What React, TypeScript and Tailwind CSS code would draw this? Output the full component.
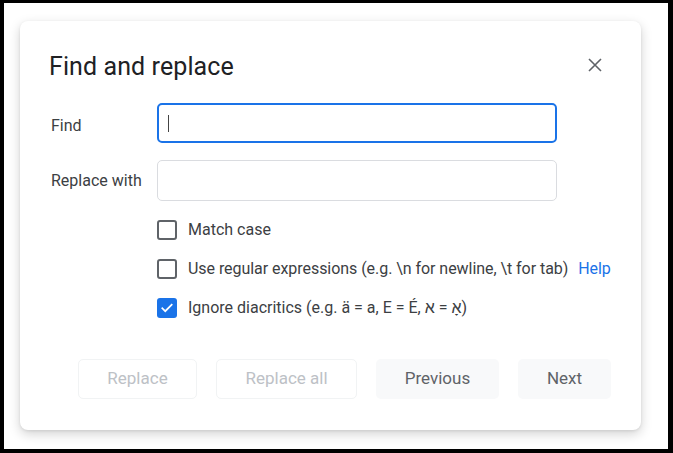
import React from "react";

function Checkbox({ checked }: { checked?: boolean }) {
  if (checked) {
    return (
      <div className="w-[20px] h-[20px] rounded-[3px] bg-[#1a73e8] flex items-center justify-center shrink-0">
        <svg width="14" height="14" viewBox="0 0 24 24">
          <path d="M4 12.5l5 5L20 6.5" fill="none" stroke="white" strokeWidth="3" strokeLinecap="square" />
        </svg>
      </div>
    );
  }
  return <div className="w-[20px] h-[20px] rounded-[3px] border-2 border-[#5f6368] shrink-0" />;
}

export default function App() {
  return (
    <div
      className="w-[673px] h-[453px] bg-black pl-[4px] pt-[3px] pr-[5px] pb-[4px]"
      style={{ fontFamily: "Roboto, 'Noto Sans', sans-serif" }}
    >
      <div className="w-full h-full bg-white pl-[16px] pt-[18px]">
        <div className="w-[621px] h-[409px] bg-white rounded-[8px] shadow-[0_4px_12px_rgba(0,0,0,0.18),0_1px_3px_rgba(0,0,0,0.08)] pl-[29px] pr-[30px] pt-[28px] flex flex-col">
          <div className="flex items-center justify-between h-[36px]">
            <div className="text-[25px] text-[#202124] leading-[36px] tracking-[0.1px]">Find and replace</div>
            <svg width="14" height="14" viewBox="0 0 14 14" className="mr-[9px] mb-[4px]">
              <path d="M1 1L13 13M13 1L1 13" stroke="#5f6368" strokeWidth="1.6" />
            </svg>
          </div>
          <div className="flex items-center mt-[18px]">
            <div className="w-[108px] pl-[2px] pt-[6px] text-[16px] text-[#3c4043]">Find</div>
            <div className="w-[400px] h-[40px] rounded-[5px] border-2 border-[#1a73e8] flex items-center pl-[9px]">
              <div className="w-[1px] h-[17px] bg-[#444]" />
            </div>
          </div>
          <div className="flex items-center mt-[17px]">
            <div className="w-[108px] pl-[2px] text-[16px] text-[#3c4043]">Replace with</div>
            <div className="w-[400px] h-[41px] rounded-[5px] border border-[#dadce0]" />
          </div>
          <div className="pl-[108px] mt-[19px] flex flex-col gap-[19px] text-[16px] text-[#3c4043]">
            <div className="flex items-center gap-[11px] h-[20px]">
              <Checkbox />
              <span>Match case</span>
            </div>
            <div className="flex items-center gap-[11px] h-[20px]">
              <Checkbox />
              <span className="tracking-[-0.05px]">
                Use regular expressions (e.g. \n for newline, \t for tab){" "}
                <span className="text-[#1a73e8] ml-[6px]">Help</span>
              </span>
            </div>
            <div className="flex items-center gap-[11px] h-[20px]">
              <Checkbox checked />
              <span>
                Ignore diacritics (e.g. ä = a, E = É, <bdi>א</bdi> = <bdi>אָ</bdi>)
              </span>
            </div>
          </div>
          <div className="flex justify-end gap-[19px] mt-[41px] text-[17px]">
            <div className="w-[119px] h-[40px] rounded-[5px] border border-[#f1f3f4] bg-white text-[#bdc1c6] flex items-center justify-center">
              Replace
            </div>
            <div className="w-[141px] h-[40px] rounded-[5px] border border-[#f1f3f4] bg-white text-[#bdc1c6] flex items-center justify-center">
              Replace all
            </div>
            <div className="w-[123px] h-[40px] rounded-[5px] bg-[#f8f9fa] text-[#5f6368] flex items-center justify-center">
              Previous
            </div>
            <div className="w-[93px] h-[40px] rounded-[5px] bg-[#f8f9fa] text-[#5f6368] flex items-center justify-center">
              Next
            </div>
          </div>
        </div>
      </div>
    </div>
  );
}
